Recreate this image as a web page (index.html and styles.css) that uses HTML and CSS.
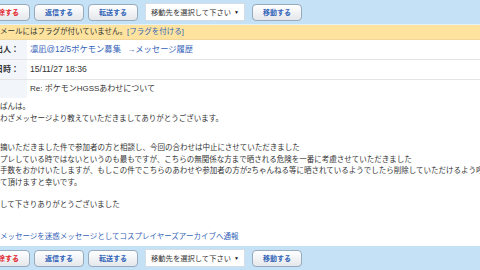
FILE: index.html
```html
<!DOCTYPE html>
<html lang="ja">
<head>
  <meta charset="UTF-8">
  <meta name="viewport" content="width=device-width, initial-scale=1">
  <title>メッセージ</title>
  <link rel="stylesheet" href="styles.css">
</head>
<body>
  <div class="page">

    <div class="toolbar">
      <button class="btn btn-delete">削除する</button>
      <button class="btn">返信する</button>
      <button class="btn">転送する</button>
      <div class="folder-select"><span>移動先を選択して下さい</span><span class="arrow">▼</span></div>
      <button class="btn">移動する</button>
    </div>

    <div class="flag-bar">このメールにはフラグが付いていません。<a href="#">[フラグを付ける]</a></div>

    <div class="msg-head">
      <div class="row">
        <div class="label">差出人：</div>
        <div class="value sender"><a href="#">凛凪@12/5ポケモン募集</a><a class="history" href="#">→メッセージ履歴</a></div>
      </div>
      <div class="row">
        <div class="label">日時：</div>
        <div class="value date">15/11/27 18:36</div>
      </div>
      <div class="row">
        <div class="label"></div>
        <div class="value">Re: ポケモンHGSSあわせについて</div>
      </div>
    </div>

    <div class="msg-body">
      <p class="para">こんばんは。<br>わざわざメッセージより教えていただきましてありがとうございます。</p>
      <p class="para gap-big">ご指摘いただきました件で参加者の方と相談し、今回の合わせは中止にさせていただきました<br>コスプレしている時ではないというのも最もですが、こちらの無関係な方まで晒される危険を一番に考慮させていただきました<br>尚お手数をおかけいたしますが、もしこの件でこちらのあわせや参加者の方が2ちゃんねる等に晒されているようでしたら削除していただけるよう呼び<br>掛けて頂けますと幸いです。</p>
      <p class="para gap-small">連絡して下さりありがとうございました</p>
      <p class="report"><a href="#">このメッセージを迷惑メッセージとしてコスプレイヤーズアーカイブへ通報</a></p>
    </div>

    <div class="toolbar toolbar-bottom">
      <button class="btn btn-delete">削除する</button>
      <button class="btn">返信する</button>
      <button class="btn">転送する</button>
      <div class="folder-select"><span>移動先を選択して下さい</span><span class="arrow">▼</span></div>
      <button class="btn">移動する</button>
    </div>

  </div>
</body>
</html>
```

FILE: styles.css
```css
* {
  margin: 0;
  padding: 0;
  box-sizing: border-box;
}
html, body {
  overflow: hidden;
}
body {
  background: #fff;
  color: #333;
  font-family: "Liberation Sans", "Noto Sans CJK JP", sans-serif;
  font-size: 7.5px;
}
a {
  color: #3563b8;
  text-decoration: none;
}
.page {
  width: 540px;
  margin-left: -25px;
}

/* toolbars */
.toolbar {
  display: flex;
  align-items: center;
  height: 25px;
  padding: 0 5px;
  background: #c4e1f6;
  border-bottom: 1px solid #e6f0f8;
}
.toolbar-bottom {
  height: 24px;
  border-bottom: none;
}
.btn {
  flex: none;
  width: 50px;
  height: 17px;
  margin-right: 4px;
  border: 1px solid #98aabd;
  border-radius: 4px;
  background: linear-gradient(#ffffff, #e4e7eb);
  color: #2e62b6;
  font-family: "Liberation Sans", "Noto Sans CJK JP", sans-serif;
  font-size: 7px;
  font-weight: bold;
}
.btn-delete {
  color: #e2222c;
}
.folder-select {
  flex: none;
  display: flex;
  align-items: center;
  justify-content: space-between;
  width: 100px;
  height: 18px;
  margin: 0 7px 0 3px;
  padding: 0 5px 0 5px;
  background: #fff;
  border: 1px solid #d4dde6;
  color: #333;
  font-size: 7.3px;
  white-space: nowrap;
}
.folder-select .arrow {
  font-size: 5px;
  color: #111;
}

/* flag */
.flag-bar {
  height: 15px;
  padding: 0 10px;
  line-height: 14px;
  background: #fde39e;
  border-bottom: 1px solid #f0d69a;
  font-size: 7.5px;
}

/* header */
.row {
  display: flex;
  border-bottom: 1px solid #e4e4e4;
}
.row:last-child {
  border-bottom: none;
}
.row .label {
  width: 52px;
  padding-right: 8px;
  background: #f2f6fa;
  text-align: right;
  font-weight: bold;
  font-size: 8px;
  line-height: 19px;
}
.row .value {
  padding-left: 3px;
  font-size: 8px;
  line-height: 19px;
  white-space: nowrap;
}
.row .sender {
  font-size: 8.3px;
}
.sender .history {
  margin-left: 6px;
}
.row .date {
  font-size: 8.6px;
}
.row:last-child .label,
.row:last-child .value {
  line-height: 18px;
}

/* body */
.msg-body {
  padding: 3px 10px 4px;
  font-size: 7.5px;
  line-height: 11.5px;
  white-space: nowrap;
}
.gap-big {
  margin-top: 18px;
}
.gap-small {
  margin-top: 11px;
}
.report {
  margin-top: 20px;
}
```
